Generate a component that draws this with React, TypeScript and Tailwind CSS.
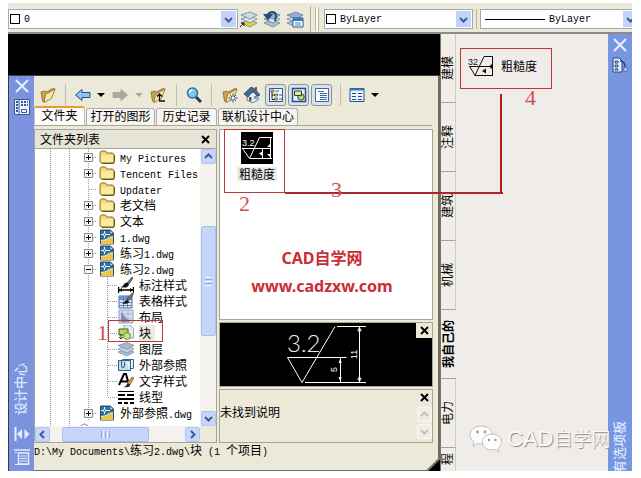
import React from "react";

const CJK = "font-['Noto_Sans_CJK_SC',sans-serif]";

/* Mixed text: ideographs at 12px, half-width characters in a 6px-wide mono face. */
function Mixed({ children }: { children: string }) {
  const parts = children.split(/([\x20-\x7e]+)/).filter(Boolean);
  return (
    <>
      {parts.map((p, i) =>
        /^[\x20-\x7e]+$/.test(p) ? (
          <span key={i} className="font-['Liberation_Mono',monospace] text-[10px] leading-none whitespace-pre">
            {p}
          </span>
        ) : (
          <span key={i}>{p}</span>
        ),
      )}
    </>
  );
}

type IconProps = { children: React.ReactNode; w?: number; h?: number };
function Icon({ children, w = 16, h = 16 }: IconProps) {
  return (
    <svg width={w} height={h} viewBox={`0 0 ${w} ${h}`} fill="none" className="shrink-0" aria-hidden="true">
      {children}
    </svg>
  );
}

/* ---------- icons ---------- */
const Folder = () => (
  <Icon>
    <path d="M1 4.500Q1 2 3 2h3.500l1.500 2H13q2 0 2 2v6.500q0 1.500-2 1.500H3q-2 0-2-1.500z" fill="#f2d66a" stroke="#8b7425" />
    <path d="M2 6h12v6q0 1-1 1H4q-2 0-2-2z" fill="#fbeb9c" />
    <path d="M3 14.500h11q1.500 0 1.500-2V6" stroke="#6b5a1c" />
  </Icon>
);
const Dwg = () => (
  <Icon>
    <path d="M1.500 1h10l3 3v11h-13z" fill="#2a6f95" stroke="#2f4e63" />
    <path d="M11 1v3.500h3.500z" fill="#dcecf5" stroke="#2f4e63" strokeWidth=".6" />
    <path d="M2 12q6-1 8-3 2-1 4-1v7H2z" fill="#f0c440" />
    <path d="M2 11.500q6 0 8-3l4-1" stroke="#eef6fa" />
    <circle cx="5.500" cy="5.500" r="1.300" stroke="#fff" />
    <path d="M5.500 2v2M5.500 7v2M2 5.500h2M7 5.500h4" stroke="#fff" />
  </Icon>
);
const DimStyle = () => (
  <Icon>
    <path d="M.5 10v6M15.500 10v6M1 13h14" stroke="#000" strokeWidth="1.500" />
    <path d="m1 13 3-2v4zM15 13l-3-2v4z" fill="#000" />
    <path d="m9 6 5-6 1 1-4 6z" fill="#777" stroke="#333" strokeWidth=".7" />
    <path d="M2 10q3 0 4-3 2-2 4-1 2 2-1 4-2 1-7 0z" fill="#111" />
  </Icon>
);
const TableStyle = () => (
  <Icon>
    <path d="M1 3h13v12H1z" fill="#dbe8fa" stroke="#466a9d" />
    <path d="M1 3h13v3H1z" fill="#6f93cc" />
    <path d="M1 6.500h13M1 9.500h13M1 12.500h13M5.500 3v12M9.500 3v12" stroke="#6787b8" />
    <path d="m9 6 5-6 1.500 1-4 6z" fill="#8a7460" stroke="#333" strokeWidth=".6" />
    <path d="M4 11q2-1 3-3 2-2 4 0 1 3-7 3z" fill="#111" />
  </Icon>
);
const Layout = () => (
  <Icon>
    <path d="M1 1h14v13H1z" fill="#d8dcee" stroke="#9aa0bd" />
    <path d="M5 1v13M10 1v13M1 5h14M1 10h14" stroke="#aab3d4" />
    <path d="m3 3 9 10H3z" fill="#858dab" />
  </Icon>
);
const Block = () => (
  <Icon>
    <path d="M6 0h6l3.500 3.500V13H6z" fill="#e6ecf4" stroke="#9ba7b8" />
    <path d="M1 4h9v6H1z" fill="#b5da55" stroke="#365f1b" />
    <circle cx="9" cy="11" r="3.400" fill="#cde58a" stroke="#5d8a2d" />
    <path d="M3 9v5l-2-2m2 2 2-2" stroke="#333" />
  </Icon>
);
const Layers = () => (
  <Icon>
    <path d="m0 11 9-3 7 3-7 4z" fill="#aebbd6" stroke="#7784a3" strokeWidth=".7" />
    <path d="m0 8 9-3 7 3-7 4z" fill="#c9d3e8" stroke="#7784a3" strokeWidth=".7" />
    <path d="m0 4.500 9-3 7 3-7 4z" fill="#a9b7d3" stroke="#7784a3" strokeWidth=".7" />
  </Icon>
);
const Xref = () => (
  <Icon>
    <path d="M4.500 2.500h11v9h-11z" fill="#e8f1f6" stroke="#3b6a86" />
    <path d="M.5 3.500h12v10H.5z" fill="#c4dce8" stroke="#2f6484" />
    <path d="M3.500 3v6q0 1.500 1.500 1.500T6.500 9V5" stroke="#2f5a78" />
    <path d="M8 6h3v5" stroke="#fff" />
  </Icon>
);
const TextStyle = () => (
  <Icon>
    <path d="M1 12 6 1h2l3 11M3 8.500h6" stroke="#000" strokeWidth="2" />
    <path d="m9 10 5-6 2 1-4 7z" fill="#d8923d" stroke="#555" strokeWidth=".6" />
    <path d="M5 14q3 0 4-3 2-1 3 1 0 3-7 2z" fill="#222" />
  </Icon>
);
const LineType = () => (
  <Icon>
    <path d="M0 2.500h16" stroke="#000" />
    <path d="M0 6h16" stroke="#000" strokeWidth="2" strokeDasharray="7 2" />
    <path d="M0 10h16" stroke="#000" strokeWidth="2" />
    <path d="M0 14h16" stroke="#000" strokeWidth="2" strokeDasharray="4 2" />
  </Icon>
);
/* shared slanted folder, decorated by the toolbar variants */
const SlantFolder = () => (
  <>
    <path d="m1 5 4-1 1.500 1L13 1.500 15 2l-4.500 9L4 15.500 2.500 14z" fill="#c9a24a" stroke="#7d6a3a" strokeWidth=".8" />
    <path d="m4 15.500 1.500-8L15 2l-3.500 9.500z" fill="#f6e6a4" stroke="#8c733a" strokeWidth=".8" />
  </>
);
const OpenFolder = () => (
  <Icon>
    <SlantFolder />
  </Icon>
);
const UpFolder = () => (
  <Icon>
    <SlantFolder />
    <path d="M9.500 14V7M7 9.500 9.500 7 12 9.500M9 14h6" stroke="#111" strokeWidth="1.300" />
  </Icon>
);
const FavFolder = () => (
  <Icon>
    <SlantFolder />
    <path d="M11 6.500v9M6.500 11h9M8 8l6 6M14 8l-6 6" stroke="#31549b" />
    <circle cx="11" cy="11" r="1.200" fill="#fff" />
  </Icon>
);
const Arrow = ({ off, flip }: { off?: boolean; flip?: boolean }) => (
  <Icon>
    <path
      d={flip ? "M15.500 8 9 2.500v3H1v5h8v3z" : "M.5 8 7 2.500v3h8v5H7v3z"}
      fill={off ? "#aaa99f" : "#8fc3ee"}
      stroke={off ? "#aaa99f" : "#1f4e8c"}
    />
  </Icon>
);
const Magnifier = () => (
  <Icon>
    <path d="m10 10 5 5" stroke="#1e3d63" strokeWidth="3" />
    <circle cx="6.500" cy="6" r="5" fill="#7cc8ee" stroke="#2e6f9f" strokeWidth="1.500" />
    <path d="M3.500 6q0-3 3-3" stroke="#fff" strokeWidth="1.500" />
  </Icon>
);
const House = () => (
  <Icon>
    <path d="m3 8 6-3 5 3v5l-6 3-5-3z" fill="#e6ecef" stroke="#4d6273" strokeWidth=".8" />
    <path d="M0 7 7 0l4 2 5 6-3 1-4-5-5 6z" fill="#3f6e95" stroke="#24435e" strokeWidth=".8" />
    <path d="M5 10h2.500v4.500L5 13.500z" fill="#71553a" />
    <path d="M10 9h3v3h-3z" fill="#5aa0cf" />
    <path d="M11 0h2v4l-2-2z" fill="#8d4f43" />
  </Icon>
);
const Tree = () => (
  <Icon>
    <path d="M1.500 1.500h13v13h-13z" fill="#f5f7fb" stroke="#33558b" />
    <path d="M4 5v7.500h3M4 8h3" stroke="#223" />
    <path d="M3 3h3v2H3zM6.500 7h3v2h-3zM6.500 11h3v2h-3z" fill="#e8c955" stroke="#4b4520" strokeWidth=".7" />
    <path d="M11 8h3M11 12h3M7.500 4H11" stroke="#33558b" />
  </Icon>
);
const Preview = () => (
  <Icon>
    <path d="M1.500 1.500h13v13h-13z" fill="#e9f2fc" stroke="#24508d" strokeWidth="1.500" />
    <circle cx="10" cy="10" r="3.200" fill="#b5d685" stroke="#2f4a25" />
    <path d="M3.500 4h7v4.500h-7z" fill="#eee0a0" stroke="#2f4a25" />
  </Icon>
);
const Desc = () => (
  <Icon>
    <path d="M1.500 1.500h13v13h-13z" fill="#fff" stroke="#3f679f" />
    <path d="M4 4.500h6M6 6.500h7M6 8.500h7M6 10.500h7M6 12.500h7" stroke="#3c69aa" />
  </Icon>
);
const Views = () => (
  <Icon>
    <path d="M1 1.500h14v13H1z" fill="#eef4fc" stroke="#23538f" />
    <path d="M1 1.500h14v2H1z" fill="#3c74bd" />
    <path d="M3 6.500h10M3 9.500h10M3 12.500h10" stroke="#274c80" strokeDasharray="4 2" />
  </Icon>
);
const LayerTool = ({ kind }: { kind: "current" | "previous" | "states" }) => (
  <Icon w={18} h={18}>
    <path d="m1 13 9-3 7 3-7 4z" fill={kind === "current" ? "#e3d04a" : "#a9c0d8"} stroke="#637790" strokeWidth=".7" />
    <path d="m1 9 9-3 7 3-7 4z" fill="#cfe0ee" stroke="#637790" strokeWidth=".7" />
    <path d="m1 5 9-3 7 3-7 4z" fill={kind === "current" ? "#cfdae3" : "#8fb2d4"} stroke="#637790" strokeWidth=".7" />
    {kind === "current" && <path d="m0 17 4-4m-3 0h3v3" stroke="#111" />}
    {kind === "previous" && <path d="M12 11q3-9-3-9-4 0-4 5M2 5l3 4 3-4z" stroke="#294a78" strokeWidth="2" />}
    {kind === "states" && (
      <>
        <path d="M7 8h10v9H7z" fill="#fff" stroke="#245a9c" />
        <path d="M7 8h10v3H7z" fill="#3a78c4" />
        <path d="M9 13h6M9 15h6" stroke="#4c7fb9" />
      </>
    )}
  </Icon>
);
const Cross = ({ light }: { light?: boolean }) => (
  <Icon w={light ? 14 : 9} h={light ? 14 : 9}>
    <path
      d={light ? "m1 1 12 12M13 1 1 13" : "m1 1 7 7M8 1 1 8"}
      stroke={light ? "#e8f0ff" : "#000"}
      strokeWidth="2"
    />
  </Icon>
);
const Chevron = ({ dir, off }: { dir: "up" | "down" | "left" | "right"; off?: boolean }) => {
  const d = {
    up: "m1 6 3.500-3.500L8 6",
    down: "m1 3 3.500 3.500L8 3",
    left: "M6 1 2.500 4.500 6 8",
    right: "m3 1 3.500 3.500L3 8",
  }[dir];
  return (
    <Icon w={9} h={9}>
      <path d={d} stroke={off ? "#c3c1b4" : "#43598a"} strokeWidth="2" />
    </Icon>
  );
};
const Caret = ({ off }: { off?: boolean }) => (
  <Icon w={8} h={4}>
    <path d="M0 0h8L4 4z" fill={off ? "#a8a698" : "#000"} />
  </Icon>
);

/* ---------- top toolbar ---------- */
function Combo({ label, value, size, line }: { label: string; value: string; size: string; line?: boolean }) {
  return (
    <div className={`flex h-5 shrink-0 items-center border border-[#9aabba] bg-white ${size}`}>
      {line ? (
        <span className="ml-1 h-px w-[60px] shrink-0 bg-black" />
      ) : (
        <span className="ml-[1px] size-[10px] shrink-0 border border-black" />
      )}
      <select
        aria-label={label}
        className="ml-1 h-4 min-w-0 flex-1 appearance-none bg-transparent font-['Liberation_Mono',monospace] text-[10px] text-black outline-none"
      >
        <option>{value}</option>
      </select>
      <span className="mr-px flex h-4 w-[15px] shrink-0 items-center justify-center bg-[#c3d3fb]">
        <Chevron dir="down" />
      </span>
    </div>
  );
}

function TopBar() {
  return (
    <div className="flex h-[31px] items-center overflow-hidden border-b-2 border-[#8d8c82] bg-[#ece9d8] pt-[3px]">
      <Combo label="图层" value="0" size="w-[230px]" />
      <div className="ml-[2px] flex shrink-0 gap-[5px]">
        <button aria-label="将对象的图层置为当前"><LayerTool kind="current" /></button>
        <button aria-label="上一个图层"><LayerTool kind="previous" /></button>
        <button aria-label="图层状态管理器"><LayerTool kind="states" /></button>
      </div>
      <span className="ml-[6px] h-full w-px shrink-0 bg-[#b5b2a2]" />
      <span className="mr-[5px] ml-1 h-6 w-1 shrink-0 border-x border-[#b5b2a2] bg-white" />
      <Combo label="颜色" value="ByLayer" size="w-[149px]" />
      <span className="mx-[3px] h-5 w-px shrink-0 bg-[#b5b2a2]" />
      <Combo label="线型" value="ByLayer" size="w-[160px]" line />
    </div>
  );
}

/* ---------- design center ---------- */
function Tool({ label, w, children }: { label: string; w: string; children: React.ReactNode }) {
  return (
    <button aria-label={label} className={`flex h-5 shrink-0 items-center justify-center ${w}`}>
      {children}
    </button>
  );
}
function Toggle({ label, children }: { label: string; children: React.ReactNode }) {
  return (
    <button
      aria-label={label}
      aria-pressed="true"
      className="flex h-[22px] w-[21px] shrink-0 items-center justify-center rounded-[3px] border border-[#8296ab] bg-[#dde2e6]"
    >
      {children}
    </button>
  );
}
const Sep = () => <span className="mx-2 h-[22px] w-px shrink-0 bg-[#c1bead]" />;

function Tools() {
  return (
    <div className="flex h-[31px] items-center pt-[7px] pl-[5px]">
      <Tool label="加载" w="w-[18px]"><OpenFolder /></Tool>
      <Sep />
      <Tool label="后退" w="w-[18px]"><Arrow /></Tool>
      <Tool label="后退列表" w="w-[18px]"><Caret /></Tool>
      <Tool label="前进" w="w-5"><Arrow off flip /></Tool>
      <Tool label="前进列表" w="w-[18px]"><Caret off /></Tool>
      <Tool label="上一级" w="w-5"><UpFolder /></Tool>
      <Sep />
      <Tool label="搜索" w="w-[18px]"><Magnifier /></Tool>
      <Sep />
      <Tool label="收藏夹" w="w-5"><FavFolder /></Tool>
      <Tool label="主页" w="w-6"><House /></Tool>
      <div className="ml-px flex gap-[2px]">
        <Toggle label="树状图切换"><Tree /></Toggle>
        <Toggle label="预览"><Preview /></Toggle>
        <Toggle label="说明"><Desc /></Toggle>
      </div>
      <Sep />
      <Tool label="视图" w="w-4"><Views /></Tool>
      <Tool label="视图列表" w="w-5"><Caret /></Tool>
    </div>
  );
}

function Tabs() {
  const tabs: [string, string][] = [
    ["文件夹", "w-[51px]"],
    ["打开的图形", "w-[69px]"],
    ["历史记录", "w-[61px]"],
    ["联机设计中心", "w-[80px]"],
  ];
  return (
    <div role="tablist" className="mr-[6px] flex h-[19px] items-end gap-px border-b border-[#a7a598]">
      {tabs.map(([t, w], i) => (
        <button
          key={t}
          role="tab"
          aria-selected={i === 0}
          className={`flex shrink-0 items-start justify-center rounded-t-[3px] border-x text-[12px] leading-[14px] whitespace-nowrap ${w} ${
            i === 0
              ? "h-[19px] border-t-2 border-x-[#c5c3b5] border-t-[#e89b32] bg-[#fdfdfb]"
              : "h-[17px] border-t border-[#a9b1b5] bg-[#f6f5ef]"
          }`}
        >
          {t}
        </button>
      ))}
    </div>
  );
}

type Node = { label: string; icon: React.ReactNode; mark?: "+" | "-"; child?: boolean; last?: boolean; picked?: boolean };
const nodes: Node[] = [
  { label: "My Pictures", icon: <Folder />, mark: "+" },
  { label: "Tencent Files", icon: <Folder />, mark: "+" },
  { label: "Updater", icon: <Folder /> },
  { label: "老文档", icon: <Folder />, mark: "+" },
  { label: "文本", icon: <Folder />, mark: "+" },
  { label: "1.dwg", icon: <Dwg />, mark: "+" },
  { label: "练习1.dwg", icon: <Dwg />, mark: "+" },
  { label: "练习2.dwg", icon: <Dwg />, mark: "-" },
  { label: "标注样式", icon: <DimStyle />, child: true },
  { label: "表格样式", icon: <TableStyle />, child: true },
  { label: "布局", icon: <Layout />, child: true },
  { label: "块", icon: <Block />, child: true, picked: true },
  { label: "图层", icon: <Layers />, child: true },
  { label: "外部参照", icon: <Xref />, child: true },
  { label: "文字样式", icon: <TextStyle />, child: true },
  { label: "线型", icon: <LineType />, child: true, last: true },
  { label: "外部参照.dwg", icon: <Dwg />, mark: "+" },
];

function TreeRow({ node }: { node: Node }) {
  const dots = { stroke: "#999", strokeDasharray: "1 1" };
  return (
    <li className="flex h-4 items-center">
      <Icon w={62} h={16}>
        <path d="M15.500 0v16M34.500 0v16M53.500 0v16" {...dots} />
        {!node.child && <path d="M54 8.500h8" {...dots} />}
        {node.mark && (
          <>
            <path d="M49.500 4.500h8v8h-8z" fill="#f6f5f1" stroke="#8c8c86" />
            <path d={node.mark === "+" ? "M51 8.500h5M53.500 6v5" : "M51 8.500h5"} stroke="#000" />
          </>
        )}
      </Icon>
      {node.child ? (
        <Icon w={21} h={16}>
          <path d={node.last ? "M10.500 0v8" : "M10.500 0v16"} {...dots} />
          <path d="M11 8.500h10" {...dots} />
        </Icon>
      ) : (
        <span className="w-[2px] shrink-0" />
      )}
      {node.icon}
      <span className={`ml-[5px] text-[12px] leading-4 whitespace-nowrap ${node.picked ? "bg-[#eceade] pr-1" : ""}`}>
        <Mixed>{node.label}</Mixed>
      </span>
    </li>
  );
}

function ScrollButton({ dir, off }: { dir: "up" | "down" | "left" | "right"; off?: boolean }) {
  return (
    <button
      aria-label={dir}
      className={`flex size-[15px] shrink-0 items-center justify-center rounded-[2px] border ${
        off ? "border-[#f8f8f4] bg-[#efede4]" : "border-[#b3c4ee] bg-[#c6d5fc]"
      }`}
    >
      <Chevron dir={dir} off={off} />
    </button>
  );
}

function FolderPane() {
  return (
    <section className="flex w-[183px] shrink-0 flex-col border border-[#a7a598] bg-white">
      <header className="flex h-[19px] items-center justify-between border-b border-[#a7a598] bg-[#e6e4d6] pr-[6px] pl-[5px] text-[12px]">
        <h2>文件夹列表</h2>
        <button aria-label="关闭"><Cross /></button>
      </header>
      <div className="flex flex-1">
        <div className="flex min-w-0 flex-1 flex-col overflow-hidden">
          <ul>
            {nodes.map((n) => (
              <TreeRow key={n.label} node={n} />
            ))}
          </ul>
          <Icon w={62} h={5}>
            <path d="M15.500 0v5M34.500 0v5" stroke="#999" strokeDasharray="1 1" />
            <path d="M46 5q3-4 7 0" stroke="#888" />
          </Icon>
        </div>
        <div className="flex w-4 flex-col items-center bg-[#f3f2ec]">
          <ScrollButton dir="up" />
          <span className="mt-[62px] flex h-[110px] w-[15px] flex-col items-center justify-center gap-px rounded-[2px] border border-[#a9bdf0] bg-[#c6d5fc]">
            <i className="h-px w-[7px] bg-[#eef3ff]" />
            <i className="h-px w-[7px] bg-[#8fa9dd]" />
            <i className="h-px w-[7px] bg-[#eef3ff]" />
            <i className="h-px w-[7px] bg-[#8fa9dd]" />
            <i className="h-px w-[7px] bg-[#eef3ff]" />
          </span>
          <span className="flex-1" />
          <ScrollButton dir="down" />
        </div>
      </div>
      <div className="flex h-4 items-center bg-[#f3f2ec]">
        <ScrollButton dir="left" />
        <span className="ml-3 flex h-[15px] w-[87px] items-center justify-center gap-px rounded-[2px] border border-[#a9bdf0] bg-[#c6d5fc]">
          <i className="h-[7px] w-px bg-[#8fa9dd]" />
          <i className="h-[7px] w-px bg-[#eef3ff]" />
          <i className="h-[7px] w-px bg-[#8fa9dd]" />
          <i className="h-[7px] w-px bg-[#eef3ff]" />
          <i className="h-[7px] w-px bg-[#8fa9dd]" />
        </span>
        <span className="flex-1" />
        <ScrollButton dir="right" />
        <span className="h-full w-4 bg-[#ece9d8]" />
      </div>
    </section>
  );
}

function CloseBox() {
  return (
    <button aria-label="关闭" className="flex h-[15px] w-4 shrink-0 items-center justify-center bg-[#ece9d8]">
      <Cross />
    </button>
  );
}

function ContentPane() {
  return (
    <div className="ml-[2px] mr-[5px] flex min-w-0 flex-1 flex-col gap-[2px]">
      <section className="h-[191px] border border-[#a7a598] bg-white pt-[2px] pl-[17px]">
        <button className="flex w-10 flex-col items-center gap-[3px]">
          <svg width="32" height="32" viewBox="0 0 32 32" fill="none" aria-hidden="true">
            <path d="M0 0h32v32H0z" fill="#000" />
            <path d="M1 16.500h22M1.500 16.500l7 10 10-21H31M9 26.500h22M18 16.500h12M29.500 5v22" stroke="#fff" />
            <path d="M21.500 17v9" stroke="#fff" />
            <path d="m29 12-3 3h3zM29 25l-3-3h3zM22 19l-4 2.500 4 3z" fill="#fff" />
            <text x="1" y="14" fontSize="9" fill="#fff" fontFamily="Liberation Sans, sans-serif">3.2</text>
          </svg>
          <span className="bg-[#ecebe8] px-[2px] text-[12px] leading-[14px] whitespace-nowrap">粗糙度</span>
        </button>
      </section>
      <section className="flex h-[65px] border border-[#a7a598] bg-black">
        <div className="min-w-0 flex-1">
          <svg width="160" height="63" viewBox="0 0 160 63" fill="none" aria-hidden="true">
            <path d="M67.500 34.500h59M67.500 34.500l14.500 25 33-56M117 3.500h29M85 59.500h61" stroke="#fff" />
            <path d="M120.500 35v24M139.500 4v55" stroke="#fff" />
            <path d="m120.500 35-2 5h3zM120.500 59l-2-5h3z" fill="#fff" />
            <circle cx="139.500" cy="7" r="1.500" stroke="#fff" />
            <circle cx="139.500" cy="56" r="1.500" stroke="#fff" />
            <text x="67" y="29" fontSize="24" fontWeight="300" fill="#eee" fontFamily="Lato, sans-serif">3.2</text>
            <text x="117" y="49" fontSize="9" fill="#fff" fontFamily="Liberation Sans, sans-serif" transform="rotate(-90 117 49)">5</text>
            <text x="137" y="36" fontSize="9" fill="#fff" fontFamily="Liberation Sans, sans-serif" transform="rotate(-90 137 36)">11</text>
          </svg>
        </div>
        <CloseBox />
      </section>
      <section className="flex h-[54px] justify-between border border-[#a7a598] bg-[#ece9d8]">
        <p className="pt-[13px] text-[12px] leading-[18px]">未找到说明</p>
        <div className="flex w-4 flex-col items-center gap-[2px]">
          <CloseBox />
          <ScrollButton dir="up" off />
          <ScrollButton dir="down" off />
        </div>
      </section>
    </div>
  );
}

const VERT = "rotate-180 [text-orientation:sideways] [writing-mode:vertical-rl]";

function DesignCenter() {
  return (
    <div className="flex flex-1 border-t border-l border-[#3a3a3a] bg-[#ece9d8]">
      <aside className="flex w-[25px] shrink-0 flex-col items-center bg-[#7b93de] pt-[3px] pb-[6px]">
        <button aria-label="关闭"><Cross light /></button>
        <button aria-label="自动调整" className="mt-[6px]">
          <Icon>
            <path d="M.5.5h15v15H.5z" fill="#edf3ff" stroke="#3c568e" />
            <path d="M5 1v14" stroke="#3c568e" />
            <path d="M2 3h2M2 6h2M2 9h2M2 12h2M7 3h2M10 3h2M7 6h2M10 6h2M13 3h1M13 6h1" stroke="#3c568e" strokeWidth="2" />
            <path d="M7.500 10.500h5v3h-5z" stroke="#3c568e" />
          </Icon>
        </button>
        <span className="flex-1" />
        <span className={`pl-1 text-[13px] leading-4 font-medium text-[#dfe8ff] ${VERT}`}>设计中心</span>
        <button aria-label="自动隐藏" className="mt-3">
          <Icon w={16} h={14}>
            <path d="M1.500 0v14" stroke="#e4ecff" strokeWidth="2" />
            <path d="M8 2v10L3 7zM10.500 2v10l5-5z" fill="#e4ecff" />
          </Icon>
        </button>
        <button aria-label="特性" className="mt-2">
          <Icon>
            <path d="M0 1h16M4.500 4h10v11h-10z" stroke="#e4ecff" strokeWidth="1.500" />
            <path d="M6 7h7M6 9.500h7M6 12h7M1 3.500h2M1 15.500h14" stroke="#e4ecff" />
          </Icon>
        </button>
      </aside>
      <div className="relative flex min-w-0 flex-1 flex-col border-r-2 border-b border-[#6d6b62]">
        <Tools />
        <Tabs />
        <div className="mt-[3px] flex">
          <FolderPane />
          <ContentPane />
        </div>
        <p className="h-[27px] text-[12px] leading-[14px] whitespace-nowrap">
          <Mixed>{"D:\\My Documents\\练习2.dwg\\块 (1 个项目)"}</Mixed>
        </p>
        <svg className="absolute -right-[2px] -bottom-px" width="13" height="13" viewBox="0 0 13 13" aria-hidden="true">
          <path d="M13 0v13H0z" fill="#000" />
          <path d="M0 13 13 0" stroke="#77756b" strokeWidth="2" />
        </svg>
      </div>
    </div>
  );
}

/* ---------- tool palette ---------- */
function Palette() {
  const tabs = ["建模", "注释", "建筑", "机械", "我自己的", "电力", "程"];
  return (
    <div className="flex w-[192px] shrink-0 bg-[#efecea]">
      <div role="tablist" className="flex w-4 flex-col">
        {tabs.map((t) => {
          const on = t === "我自己的";
          return (
            <button
              key={t}
              role="tab"
              aria-selected={on}
              className={`flex w-4 items-center justify-center border-l border-[#77756b] pr-[3px] text-[12px] leading-[15px] whitespace-nowrap ${
                t === "程" ? "h-[23px]" : "h-[69px] border-b border-b-[#a7a598]"
              } ${on ? "bg-[#efecea] font-bold" : "border-r border-r-[#cfccc2] bg-[#f0eee6]"}`}
            >
              <span className={VERT}>{t}</span>
            </button>
          );
        })}
      </div>
      <div className="flex-1 pt-4 pl-[11px]">
        <button className="flex h-8 items-center gap-[6px] text-[12px]">
          <svg width="28" height="22" viewBox="0 0 28 22" fill="none" aria-hidden="true">
            <path d="M2 11.500h24M3 12l5 8.500L17 1.500h9M8 20.500h18M25.500 1.500v19" stroke="#111" />
            <path d="m25 9-3 2.500 3 2.500zM15 16l4-2.500v5z" fill="#111" />
            <text x="1" y="10" fontSize="9" fill="#111" fontFamily="Liberation Sans, sans-serif">32</text>
          </svg>
          粗糙度
        </button>
      </div>
      <aside className="flex w-6 flex-col items-center bg-[#7796e2] pt-1">
        <button aria-label="关闭"><Cross light /></button>
        <button aria-label="工具选项板" className="mt-[5px]">
          <Icon>
            <path d="M1 1h6l3 3v11H1z" fill="#e7effc" stroke="#27477c" />
            <path d="M3 4h3v2H3zM3 8h3v2H3zM3 12h3v1H3z" stroke="#27477c" />
            <path d="M8 4q5 0 5 6" stroke="#27477c" strokeWidth="1.500" />
            <path d="M12 11h3v3h-3z" fill="#eef6e0" stroke="#27477c" strokeWidth=".6" />
          </Icon>
        </button>
        <span className="flex-1" />
        <span className={`-mb-[2px] pl-[2px] text-[13px] leading-4 font-medium text-[#dfe8ff] ${VERT}`}>有选项板</span>
      </aside>
    </div>
  );
}

/* ---------- annotations drawn over the windows ---------- */
function Notes() {
  const digit = "absolute font-['Liberation_Serif',serif] text-[22px] leading-[22px] text-[#d2504e]";
  return (
    <div className="pointer-events-none absolute inset-0">
      <span className="absolute top-[317px] left-[100px] h-[22px] w-[55px] border border-[#b8383c]" />
      <span className="absolute top-[126px] left-[216px] h-[64px] w-[61px] border border-[#b8383c]" />
      <span className="absolute top-[45px] left-[452px] h-[41px] w-[92px] border border-[#c23434]" />
      <span className="absolute top-[189px] left-[277px] h-[2px] w-[218px] bg-[#a92a2e]" />
      <span className="absolute top-[91px] left-[492px] h-[100px] w-[2px] bg-[#b81c1c]" />
      <span className={`${digit} top-[319px] left-[89px]`}>1</span>
      <span className={`${digit} top-[190px] left-[231px]`}>2</span>
      <span className={`${digit} top-[176px] left-[323px]`}>3</span>
      <span className={`${digit} top-[84px] left-[517px]`}>4</span>
      <div className="absolute top-[241px] left-[239px] w-[150px] text-center font-['Noto_Sans','Noto_Sans_CJK_SC',sans-serif] text-[16px] leading-[28px] font-bold whitespace-nowrap text-[#cb2c36]">
        <p>CAD自学网</p>
        <p>www.cadzxw.com</p>
      </div>
      <div className="absolute top-[420px] left-[461px] flex items-center gap-1 text-[#fbfbfb] [text-shadow:1px_1px_1px_#8a8a8a]">
        <svg width="34" height="30" viewBox="0 0 34 30" aria-hidden="true">
          <g fill="#fdfdfd" stroke="#b4b2b0" strokeWidth=".8">
            <path d="M12 2C5.500 2 1 6 1 11c0 3 1.500 5 4 7l-1 4 4.500-2.500q2 .5 4 .5c6 0 11-4 11-9s-5-9-11.500-9z" />
            <path d="M23 10c-5.500 0-9.500 3.500-9.500 8s4 8 9.500 8l3.500-.5L30 28l-1-3.500c2-1.500 3.500-4 3.500-6.500 0-4.500-4-8-9.500-8z" />
          </g>
          <g fill="#9c9a98">
            <circle cx="8.500" cy="8" r="1.400" />
            <circle cx="16" cy="8" r="1.400" />
            <circle cx="20" cy="16" r="1.200" />
            <circle cx="26.500" cy="16" r="1.200" />
          </g>
        </svg>
        <span className="text-[19px] leading-[30px] font-light whitespace-nowrap">
          <span className="font-['Liberation_Sans',sans-serif] text-[22px]">CAD</span>自学网
        </span>
      </div>
    </div>
  );
}

export default function App() {
  return (
    <main className={`bg-white pt-[3px] pr-[9px] pb-[7px] pl-2 text-black ${CJK}`}>
      <div className="relative overflow-hidden">
        <TopBar />
        <div className="flex bg-black">
          <div className="flex min-w-0 flex-1 flex-col">
            <div className="h-[41px] bg-black" />
            <DesignCenter />
          </div>
          <Palette />
        </div>
        <Notes />
      </div>
    </main>
  );
}
